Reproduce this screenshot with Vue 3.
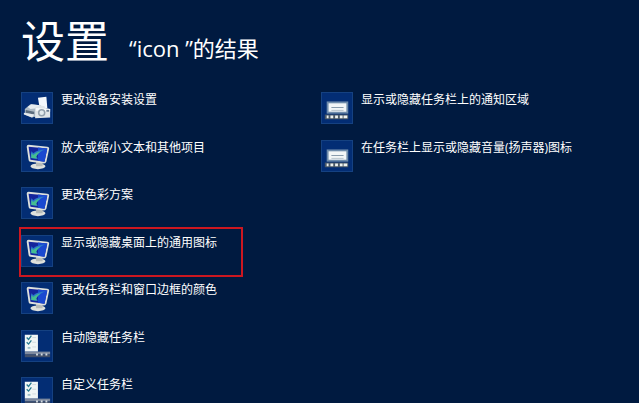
<template>
    <main class="search-page">
        <header class="heading">
            <h1>设置</h1>
            <p>“icon ”的结果</p>
        </header>

        <div class="results">
            <ul v-for="(column, index) in columns" :key="index">
                <li v-for="item in column" :key="item.label">
                    <a href="#" class="result" :class="{ marked: item.marked }">
                        <span class="tile">
                            <!-- printer and camera -->
                            <svg v-if="item.icon === 'device'" viewBox="0 0 32 32" aria-hidden="true">
                                <path d="M17 5l9-1 1 12-8 1z" fill="#f4f8fc" />
                                <path d="M3 17l6-5 11 1 1 11-11 2-7-3z" fill="#aebbc6" />
                                <path d="M6 15l4-3 9 1-1 3-9 1z" fill="#e8edf0" />
                                <path d="M4 18l9 2v3l-9-2z" fill="#5b6c7e" />
                                <path d="M2 21l11 2-2 3-9-3z" fill="#e6ebef" />
                                <path d="M14 15l4-1 1-1 5 1 1 2 5 1v9l-16 1z" fill="#e0e5e8" />
                                <path d="M15 16l15 1v3l-15-1z" fill="#f8fafa" />
                                <circle cx="21" cy="21" r="4" fill="#93a1ad" />
                                <circle cx="21" cy="21" r="2.4" fill="#e2eaee" />
                                <path d="M26 18h3v2h-3z" fill="#6c7e92" />
                            </svg>

                            <!-- monitor -->
                            <svg v-else-if="item.icon === 'monitor'" viewBox="0 0 32 32" aria-hidden="true">
                                <ellipse cx="17" cy="27" rx="8" ry="3" fill="#dfe1dc" />
                                <path d="M15 22l7 1v4h-7z" fill="#b6bab8" />
                                <path d="M7 4l20 2q2 0 2 2l-3 14q-1 2-3 2L9 22q-2 0-2-2L5 6q0-2 2-2z" fill="#dde0dc" />
                                <path d="M7 6l20 2-3 14L9 20z" fill="#14259c" />
                                <path d="M17 7l10 1-3 14-7-1z" fill="#1a49d0" />
                                <path d="M25 9q-8 0-13 4l-2-2-1 7 8 1-2-3q4-5 10-7z" fill="#2b78c8" />
                                <path d="M20 11q-5 1-8 4l-2-2v5l6 1-1-2q2-4 5-6z" fill="#45bd90" />
                            </svg>

                            <!-- task bar checklist -->
                            <svg v-else-if="item.icon === 'checklist'" viewBox="0 0 32 32" aria-hidden="true">
                                <path d="M3 4h14v18H3z" fill="#f1f6f6" />
                                <path d="M11 7h4M11 12h4M11 17h4" stroke="#d0d9de" />
                                <path d="M5 7l2 2 3-4M5 12l2 2 3-4" fill="none" stroke="#287a91" stroke-width="1.4" />
                                <path d="M6 17h3v2H6z" fill="#9fc0cb" />
                                <path d="M3 22h27v3H3z" fill="#7d899e" />
                                <path d="M3 25h27v3H3z" fill="#435069" />
                                <path d="M15 24h2v2h-2zM20 24h2v2h-2zM25 24h2v2h-2z" fill="#d5dbe0" />
                            </svg>

                            <!-- notification area -->
                            <svg v-else viewBox="0 0 32 32" aria-hidden="true">
                                <path d="M5 9h23v13H5z" fill="#6f8cab" />
                                <path d="M7 11h19v9H7z" fill="#f3f6f7" />
                                <path d="M10 15h13v1H10z" fill="#8296a8" />
                                <path d="M10 18h13v1H10z" fill="#b4c1cb" />
                                <path d="M3 23h25v5H3z" fill="#4b5967" />
                                <path d="M5 24h2v3H5zM9 24h3v3H9zM14 24h3v3h-3zM19 24h3v3h-3zM23 24h4v3h-4z" fill="#edf1ef" />
                            </svg>
                        </span>
                        <span class="label">{{ item.label }}</span>
                    </a>
                </li>
            </ul>
        </div>
    </main>
</template>

<script setup>
    const columns = [
        [
            { label: '更改设备安装设置', icon: 'device' },
            { label: '放大或缩小文本和其他项目', icon: 'monitor' },
            { label: '更改色彩方案', icon: 'monitor' },
            { label: '显示或隐藏桌面上的通用图标', icon: 'monitor', marked: true },
            { label: '更改任务栏和窗口边框的颜色', icon: 'monitor' },
            { label: '自动隐藏任务栏', icon: 'checklist' },
            { label: '自定义任务栏', icon: 'checklist' },
        ],
        [
            { label: '显示或隐藏任务栏上的通知区域', icon: 'tray' },
            { label: '在任务栏上显示或隐藏音量(扬声器)图标', icon: 'tray' },
        ],
    ]
</script>

<style>
    body {
        margin: 0;
        background-color: #001a40;
    }
</style>

<style scoped>
    .search-page {
        box-sizing: border-box;
        height: 100vh;
        overflow: hidden;
        padding: 12px 18px 0 21px;
        color: #fff;
        font-family: "Open Sans", "Noto Sans CJK SC", sans-serif;
    }
    .heading {
        display: flex;
        align-items: flex-start;
        gap: 20px;
        height: 80px;
    }
    h1 {
        margin: 0;
        font-size: 44px;
        font-weight: 400;
        line-height: 58px;
    }
    .heading p {
        margin: 0;
        padding-top: 20px;
        font-size: 22px;
        line-height: 32px;
    }
    .results {
        display: grid;
        grid-template-columns: 1fr 1fr;
    }
    ul {
        display: grid;
        grid-auto-rows: 48px 47px;
        align-content: start;
        margin: 0;
        padding: 0;
        list-style: none;
    }
    .result {
        position: relative;
        display: flex;
        gap: 8px;
        color: #fff;
        text-decoration: none;
    }
    .tile {
        box-sizing: border-box;
        flex: none;
        width: 32px;
        height: 32px;
        border: 1px solid #154181;
        background-color: #032d74;
    }
    .tile svg {
        display: block;
        width: 100%;
        height: 100%;
    }
    .label {
        font-size: 12px;
        line-height: 16px;
    }
    /* red frame around the highlighted result */
    .marked::after {
        content: "";
        position: absolute;
        box-sizing: border-box;
        top: -8px;
        left: -2px;
        width: 224px;
        height: 50px;
        border: 2px solid #cc1720;
    }
</style>
